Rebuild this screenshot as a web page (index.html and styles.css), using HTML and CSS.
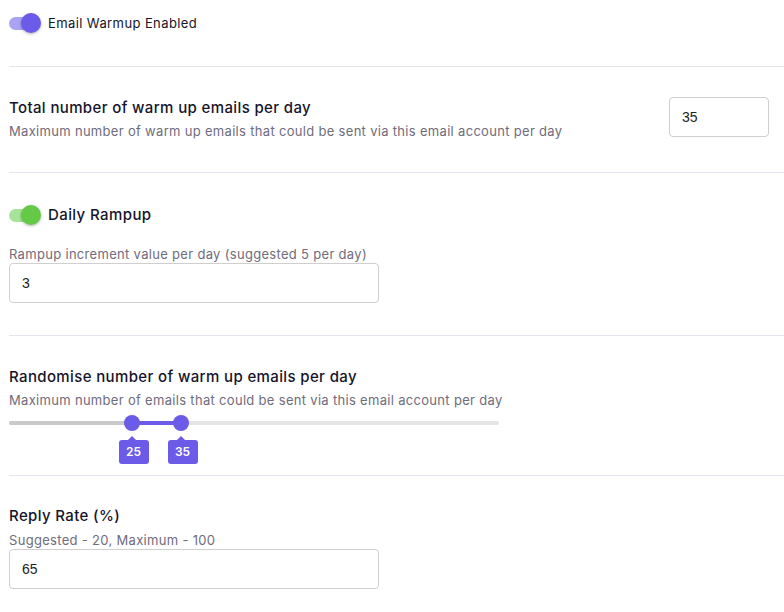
FILE: index.html
```html
<!DOCTYPE html>
<html lang="en">
<head>
<meta charset="utf-8">
<title>Warmup settings</title>
<link rel="stylesheet" href="styles.css">
</head>
<body>
<div class="settings">
  <section class="block block-first">
    <label class="switch-row">
      <span class="switch switch-purple"><span class="switch-track"></span><span class="switch-thumb"></span></span>
      <span class="switch-text">Email Warmup Enabled</span>
    </label>
  </section>

  <section class="block block-total">
    <div class="row">
      <div class="row-text">
        <div class="title">Total number of warm up emails per day</div>
        <div class="hint">Maximum number of warm up emails that could be sent via this email account per day</div>
      </div>
      <input class="field field-small" type="text" value="35">
    </div>
  </section>

  <section class="block block-rampup">
    <label class="switch-row">
      <span class="switch switch-green"><span class="switch-track"></span><span class="switch-thumb"></span></span>
      <span class="switch-title">Daily Rampup</span>
    </label>
    <div class="hint hint-label">Rampup increment value per day (suggested 5 per day)</div>
    <input class="field field-wide" type="text" value="3">
  </section>

  <section class="block block-random">
    <div class="title">Randomise number of warm up emails per day</div>
    <div class="hint">Maximum number of emails that could be sent via this email account per day</div>
    <div class="range">
      <div class="range-rail">
        <div class="range-done" style="width:25%"></div>
        <div class="range-fill" style="left:25%;width:10%"></div>
      </div>
      <div class="range-knob" style="left:25%"><span class="range-tip">25</span></div>
      <div class="range-knob" style="left:35%"><span class="range-tip">35</span></div>
    </div>
  </section>

  <section class="block block-reply">
    <div class="title">Reply Rate (%)</div>
    <div class="hint hint-label hint-tight">Suggested - 20, Maximum - 100</div>
    <input class="field field-wide" type="text" value="65">
  </section>
</div>
</body>
</html>
```

FILE: styles.css
```css
* {
  box-sizing: border-box;
}

body {
  margin: 0;
  background: #ffffff;
  font-family: "Inter", "DejaVu Sans", sans-serif;
  color: #15142a;
}

.settings {
  padding-left: 9px;
}

.block {
  border-bottom: 1px solid #e6e3ee;
}

.block-first {
  height: 67px;
  padding-top: 13px;
}

.block-total {
  padding: 30px 15px 32px 0;
}

.block-rampup {
  padding: 32px 0 32px 0;
}

.block-random {
  padding: 31px 0 11px 0;
}

.block-reply {
  padding-top: 30px;
  border-bottom: none;
}

/* toggle switches */
.switch-row {
  display: flex;
  align-items: center;
  gap: 7px;
}

.switch {
  position: relative;
  width: 32px;
  height: 20px;
  flex: none;
}

.switch-track {
  position: absolute;
  left: 0;
  top: 4px;
  width: 30px;
  height: 13px;
  border-radius: 7px;
}

.switch-thumb {
  position: absolute;
  right: 0;
  top: 0;
  width: 20px;
  height: 20px;
  border-radius: 50%;
  box-shadow: 0 1px 3px rgba(0, 0, 0, 0.3);
}

.switch-purple .switch-track {
  background: #aaa2f3;
}

.switch-purple .switch-thumb {
  background: #6c5ae8;
}

.switch-green .switch-track {
  background: #a8e39a;
}

.switch-green .switch-thumb {
  background: #63c946;
}

.switch-text {
  font-size: 13px;
  line-height: 20px;
  letter-spacing: 0.4px;
}

.switch-title {
  font-size: 15px;
  font-weight: 500;
  line-height: 20px;
  letter-spacing: 0.4px;
}

/* text */
.title {
  font-size: 15px;
  font-weight: 500;
  line-height: 20px;
  letter-spacing: 0.37px;
}

.hint {
  margin-top: 4px;
  font-size: 13px;
  line-height: 18px;
  color: #6f6c7c;
  letter-spacing: 0.31px;
}

.hint-label {
  margin-top: 21px;
  margin-bottom: 1px;
  line-height: 16px;
}

.hint-tight {
  margin-top: 6px;
}

/* inputs */
.row {
  display: flex;
  justify-content: space-between;
  align-items: flex-start;
}

.row-text {
  padding-top: 1px;
}

.field {
  display: block;
  height: 40px;
  border: 1px solid #cfcfcf;
  border-radius: 4px;
  padding: 0 12px;
  font-family: "Liberation Sans", Arial, sans-serif;
  font-size: 14px;
  color: #222222;
  background: #ffffff;
  outline: none;
}

.field-small {
  width: 100px;
}

.field-wide {
  width: 370px;
}

/* dual range slider */
.range {
  position: relative;
  width: 490px;
  height: 55px;
}

.range-rail {
  position: absolute;
  left: 0;
  right: 0;
  top: 12px;
  height: 4px;
  border-radius: 2px;
  background: #e4e4e4;
}

.range-done {
  position: absolute;
  left: 0;
  top: 0;
  height: 4px;
  border-radius: 2px 0 0 2px;
  background: #cacaca;
}

.range-fill {
  position: absolute;
  top: 0;
  height: 4px;
  background: #6c5ae8;
}

.range-knob {
  position: absolute;
  top: 6px;
  width: 16px;
  height: 16px;
  margin-left: -8px;
  border-radius: 50%;
  background: #6c5ae8;
}

.range-tip {
  position: absolute;
  left: 50%;
  top: 25px;
  transform: translateX(-50%);
  width: 30px;
  height: 24px;
  margin-left: 2px;
  border-radius: 3px;
  background: #6c5ae8;
  color: #ffffff;
  font-size: 12px;
  font-weight: 600;
  line-height: 24px;
  text-align: center;
}

.range-tip::before {
  content: "";
  position: absolute;
  left: 50%;
  top: -4px;
  margin-left: -6px;
  border-left: 4px solid transparent;
  border-right: 4px solid transparent;
  border-bottom: 4px solid #6c5ae8;
}
```
